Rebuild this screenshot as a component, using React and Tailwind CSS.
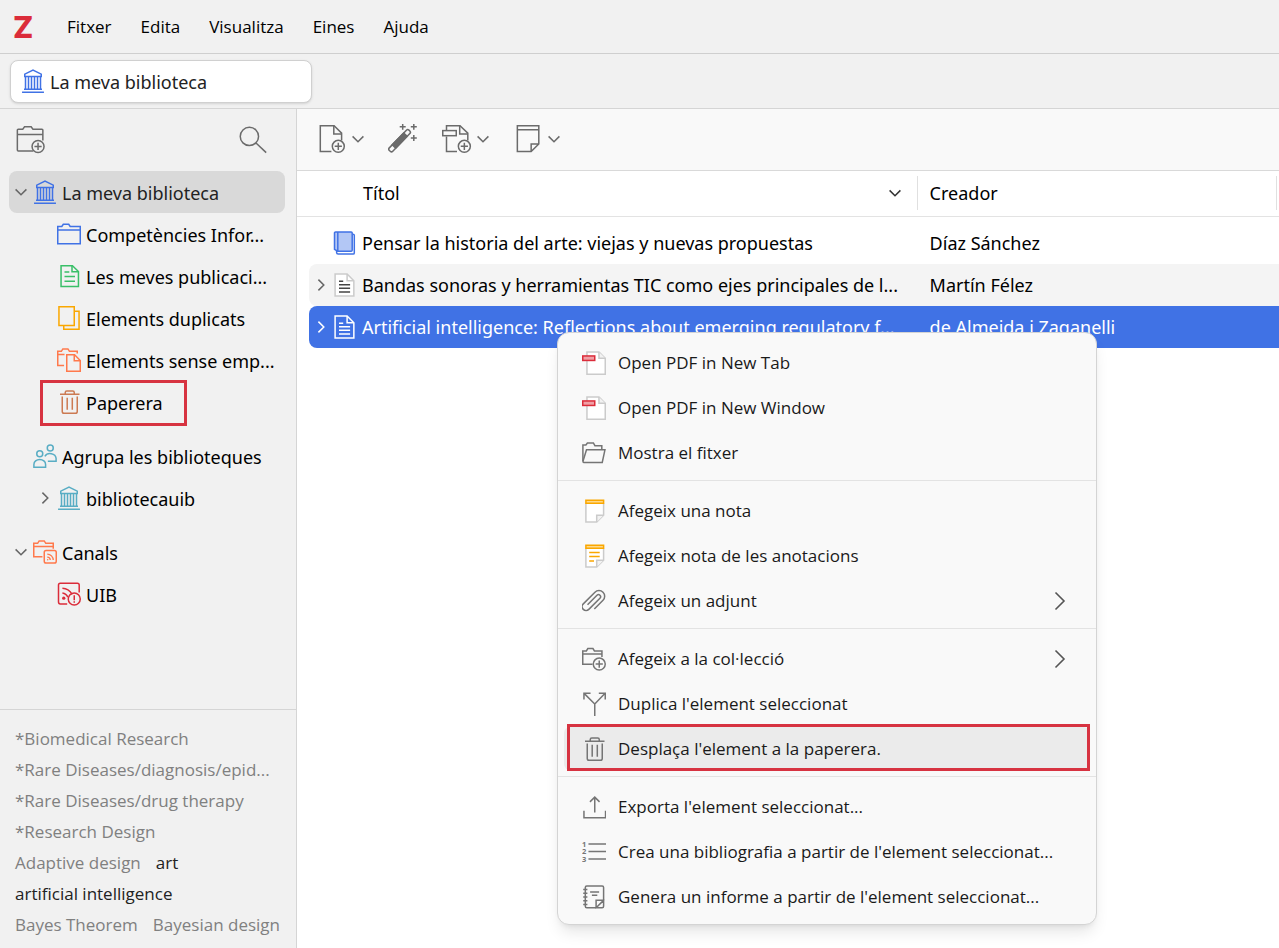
import React, { useState } from 'react';
import clsx from 'clsx';

const Icon = ({ size = 'size-6', box = 16, className, children }) => (
  <svg
    viewBox={`0 0 ${box} ${box}`}
    className={clsx(size, 'shrink-0', className)}
    fill="none"
    stroke="currentColor"
    strokeWidth="1"
    aria-hidden="true"
  >
    {children}
  </svg>
);

const ChevronDown = ({ className }) => (
  <svg viewBox="0 0 12 12" className={clsx('size-3 shrink-0', className)} fill="none" stroke="currentColor" strokeWidth="1.5" aria-hidden="true">
    <path d="M.6 3.4 6 8.8l5.4-5.4" />
  </svg>
);

const ChevronRight = ({ className }) => (
  <svg viewBox="0 0 12 12" className={clsx('size-3 shrink-0', className)} fill="none" stroke="currentColor" strokeWidth="1.5" aria-hidden="true">
    <path d="M3.4.6 8.8 6l-5.4 5.4" />
  </svg>
);

const LibraryIcon = ({ className }) => (
  <Icon className={className}>
    <path d="M2.5 5V3.4L8 .7l5.5 2.7V5z" />
    <path d="M3 5v8.5M5 5v8.5M7 5v8.5M9 5v8.5M11 5v8.5M13 5v8.5M2 13.5h12M.7 15.5h14.6" />
  </Icon>
);

const FolderIcon = ({ className }) => (
  <Icon className={className}>
    <path d="M.5 14.5V3h2.7l1-1.5h3.6l1 1.5h6.7v11.5zM.5 5.3h15" />
  </Icon>
);

const PublicationsIcon = ({ className }) => (
  <Icon className={className}>
    <path d="M2.7 1.2h7.6L14.3 5v10H2.7z" />
    <path d="M10 1.2v4h4.3M5 5.4h3.2M5 8.4h7M5 11.5h7" />
  </Icon>
);

const DuplicatesIcon = ({ className }) => (
  <Icon className={className}>
    <path d="M1.3.5h10.2v12.5H1.3z" />
    <path d="M11.5 3.5h3.2v12H4.5V13" />
  </Icon>
);

const UnfiledIcon = ({ className }) => (
  <Icon className={className}>
    <path d="M4.7 11.7H.5V2.2h2.4l1-1.6h3.4l1 1.6h5.2v1.5M.5 4.4H5" />
    <path d="M6.5 4.5h5.2l3.8 3.8v7.2h-9z" />
    <path d="M11.5 4.5v4h4" />
  </Icon>
);

const TrashIcon = ({ className }) => (
  <Icon className={className}>
    <path d="M2 2.8h13M5.5 2.8V1.6q0-1 1-1h4q1 0 1 1v1.2" />
    <path d="M3.5 4.3v10q0 1.2 1.2 1.2h7.6q1.2 0 1.2-1.2v-10M6.8 5.2v8M10.2 5.2v8" />
  </Icon>
);

const GroupsIcon = ({ className }) => (
  <Icon className={className}>
    <circle cx="11.5" cy="2.6" r="2" />
    <circle cx="4.5" cy="6.5" r="2" />
    <path d="M.6 15.5v-1.9a3.9 3.3 0 0 1 7.8 0v1.9z" />
    <path d="M7.9 8.2a4 3.5 0 0 1 7.5 1.4v1.9h-5.5" />
  </Icon>
);

const FeedsIcon = ({ className }) => (
  <Icon className={className}>
    <path d="M6.3 11.2H.5V2.2h2.6l1-1.6h3.4l1 1.6h5v3.6M.5 4.4h13" />
    <rect x="7.5" y="7" width="8" height="8.4" rx="1.2" />
    <path d="M9.5 9.4a4 4 0 0 1 4 4M9.5 11.4a2 2 0 0 1 2 2" strokeWidth=".9" />
    <circle cx="9.8" cy="13.2" r=".5" fill="currentColor" stroke="none" />
  </Icon>
);

const FeedErrorIcon = ({ className }) => (
  <Icon className={className}>
    <path d="M6.8 14.6H2.2q-1.2 0-1.2-1.2V2q0-1.2 1.2-1.2h11.4q1.2 0 1.2 1.2v5" />
    <path d="M3.6 4.2q4.2.2 6.5 4M3.6 7.4q2.6.3 3.6 2.8" />
    <circle cx="4.5" cy="10.8" r="1.1" fill="currentColor" stroke="none" />
    <circle cx="11.5" cy="11.3" r="4" />
    <path d="M11.5 8.9v3.2M11.5 12.8v1.1" />
  </Icon>
);

const CollectionAddIcon = ({ className }) => (
  <Icon className={className}>
    <path d="M7 11.5H.5V2.6h2.4l1-1.6h3.4l1 1.6h5v4M.5 4.6h13" />
    <circle cx="11.5" cy="11.4" r="4" />
    <path d="M11.5 9v4.8M9.1 11.4h4.8" />
  </Icon>
);

const PdfIcon = () => (
  <Icon>
    <path d="M3.3.6h8l4.2 4.2v10.7H3.3z" fill="#fff" stroke="#cbcbcb" />
    <path d="M11.3.6v4.2h4.2" fill="#f2f2f2" stroke="#cbcbcb" />
    <rect x=".5" y="3.3" width="8" height="3" fill="#f0a0a6" stroke="#db2c3a" />
  </Icon>
);

const FileFolderIcon = () => (
  <Icon className="text-[#757575]">
    <path d="M.6 13.5V2.7h2l1-1.4h4l1 1.8h4.6v2.8" />
    <path d="M3 5.9h12.3l-1.8 8.4H1.2q-.6 0-.5-1z" />
  </Icon>
);

const NoteIcon = ({ lines }) => (
  <Icon>
    <path d="M2.6 3v12.4h7.2l4.6-4.6V3" fill="#fff" stroke="#cbcbcb" />
    <path d="M9.8 15.4v-4.6h4.6" fill="#f2f2f2" stroke="#cbcbcb" />
    <path d="M2.6.8h11.8v2.1H2.6z" fill="#ffd98a" stroke="#faa700" />
    {lines && <path d="M4.8 5.6h7M4.8 8.4h7M4.8 11.4h3.2" stroke="#faa700" />}
  </Icon>
);

const AttachmentIcon = () => (
  <Icon className="text-[#757575]">
    <g transform="rotate(-45 8 8)">
      <path d="M3.2 6.7h8.9a1.4 1.4 0 0 1 0 2.8H1.6a2.6 2.6 0 0 1 0-5.2h11a3.8 3.8 0 0 1 0 7.6H4.4" />
    </g>
  </Icon>
);

const DuplicateItemIcon = () => (
  <Icon className="text-[#757575]">
    <path d="M8.5 16V8L1.4.9M8.5 8 15.4.9M1.3 5V.9h4.4M11.2.9h4.3V5" />
  </Icon>
);

const ExportIcon = () => (
  <Icon className="text-[#757575]">
    <path d="M1.3 10.5v4.6h14.4v-4.6M8.5 11.6V1.4M5.3 4.6l3.2-3.2 3.2 3.2" />
  </Icon>
);

const BibliographyIcon = () => (
  <Icon className="text-[#757575]">
    <path d="M4.3 2.6H16M4.3 7.6H16M4.3 12.6H16" />
    <g fill="currentColor" stroke="none" fontFamily="Open Sans, sans-serif" fontSize="5" fontWeight="700">
      <text x="0" y="4.4">1</text>
      <text x="0" y="9.4">2</text>
      <text x="0" y="14.4">3</text>
    </g>
  </Icon>
);

const ReportIcon = () => (
  <Icon className="text-[#757575]">
    <path d="M9.4 15.2H3.2q-1 0-1-1V1.6q0-1 1-1h10.2q1 0 1 1v8.6" />
    <path d="M9.4 15.2v-5h5v4q0 1-1 1zM9.6 15l4.6-4.6" />
    <path d="M5.4 4.6h6M6.6 6.9h3.6M.8 3h2.8M.8 5.5h2.8M.8 8h2.8M.8 10.5h2.8M.8 13h2.8" />
  </Icon>
);

const BookIcon = () => (
  <Icon className="text-[#4072e5]">
    <path d="M2.4 13.2v1.2q0 1 1 1h10q.8 0 .8-.8V2.8q0-.6-.9-.6" fill="#fff" />
    <path d="M1.7.6h10.4q.7 0 .7.7v11.5q0 .7-.7.7H3.1L1 12.2V1.3q0-.7.7-.7z" fill="#b3c7f5" />
    <path d="M3.2.6v12.8" />
  </Icon>
);

const ArticleIcon = ({ selected }) => (
  <Icon className={selected ? 'text-white' : 'text-[#444]'}>
    <path d="M1.4.6h8l4.5 4.6v10.2H1.4z" fill={selected ? 'none' : '#fff'} stroke={selected ? '#fff' : '#cbcbcb'} />
    <path d="M9.4.6v4.6h4.5" stroke={selected ? '#fff' : '#cbcbcb'} />
    <path d="M4 5.5h2.8M4 7.8h7.4M4 10.2h7.4M4 12.6h7.4" />
  </Icon>
);

const NewCollectionIcon = () => (
  <Icon size="size-[30px]" box={20}>
    <path d="M11.5 17.3H1.5q-.6 0-.6-.6V3.4q0-.6.6-.6h3l1.2-1.6h4.4l1.2 1.6h6q.6 0 .6.6v7M.9 6.3h17" />
    <circle cx="14.7" cy="14.3" r="4" />
    <path d="M14.7 11.9v4.8M12.3 14.3h4.8" />
  </Icon>
);

const SearchIcon = () => (
  <Icon size="size-[30px]" box={20}>
    <circle cx="7.6" cy="7.6" r="6.1" />
    <path d="m12 12 6.8 6.4" />
  </Icon>
);

const NewItemIcon = () => (
  <Icon size="size-[30px]" box={20}>
    <path d="M9.6 18.4H2.2V1.1h9.2l5 5V11" />
    <path d="M11.2 1.1v5.6h5.2" />
    <circle cx="14.2" cy="14.9" r="4" />
    <path d="M14.2 12.5v4.8M11.8 14.9h4.8" />
  </Icon>
);

const WandIcon = () => (
  <Icon size="size-[30px]" box={20}>
    <g transform="rotate(-46 7.8 11.2)">
      <rect x="-1.6" y="9.5" width="18.8" height="3.2" rx="1.2" />
      <rect x="2.4" y="9.5" width="11" height="3.2" fill="currentColor" />
    </g>
    <path d="M9.8-.2v4M7.8 1.8h4M17.2-.2v4M15.2 1.8h4M17.2 7.4v4M15.2 9.4h4" />
  </Icon>
);

const AddPdfIcon = () => (
  <Icon size="size-[30px]" box={20}>
    <path d="M3 4V1.1h9l5.2 5V11M3 8.4v10h7" />
    <path d="M11.8 1.1v5.6h5.4" />
    <rect x=".5" y="4.4" width="9" height="3.4" />
    <circle cx="14.9" cy="14.9" r="4" />
    <path d="M14.9 12.5v4.8M12.5 14.9h4.8" />
  </Icon>
);

const NewNoteIcon = () => (
  <Icon size="size-[30px]" box={20}>
    <path d="M2.9 1.1h14.3v12.2l-5.1 5.1H2.9zM2.9 3.9h14.3M12.1 18.4v-5.1h5.1" />
  </Icon>
);

const menus = ['Fitxer', 'Edita', 'Visualitza', 'Eines', 'Ajuda'];

const collections = [
  [
    { id: 'lib', label: 'La meva biblioteca', icon: LibraryIcon, color: 'text-[#4072e5]', open: true, selected: true },
    { id: 'comp', label: 'Competències Infor...', icon: FolderIcon, color: 'text-[#4072e5]', nested: true },
    { id: 'pub', label: 'Les meves publicaci...', icon: PublicationsIcon, color: 'text-[#39bf68]', nested: true },
    { id: 'dup', label: 'Elements duplicats', icon: DuplicatesIcon, color: 'text-[#faa700]', nested: true },
    { id: 'unf', label: 'Elements sense emp...', icon: UnfiledIcon, color: 'text-[#ff794c]', nested: true },
    { id: 'trash', label: 'Paperera', icon: TrashIcon, color: 'text-[#cc7a52]', nested: true, marked: true },
  ],
  [
    { id: 'groups', label: 'Agrupa les biblioteques', icon: GroupsIcon, color: 'text-[#59adc4]' },
    { id: 'uiblib', label: 'bibliotecauib', icon: LibraryIcon, color: 'text-[#59adc4]', nested: true, open: false },
  ],
  [
    { id: 'feeds', label: 'Canals', icon: FeedsIcon, color: 'text-[#ff794c]', open: true },
    { id: 'uib', label: 'UIB', icon: FeedErrorIcon, color: 'text-[#db2c3a]', nested: true },
  ],
];

const tags = [
  { name: '*Biomedical Research' },
  { name: '*Rare Diseases/diagnosis/epid...' },
  { name: '*Rare Diseases/drug therapy' },
  { name: '*Research Design' },
  { name: 'Adaptive design' },
  { name: 'art', active: true },
  { name: 'artificial intelligence', active: true },
  { name: 'Bayes Theorem' },
  { name: 'Bayesian design' },
];

const items = [
  { title: 'Pensar la historia del arte: viejas y nuevas propuestas', creator: 'Díaz Sánchez', icon: BookIcon },
  {
    title: 'Bandas sonoras y herramientas TIC como ejes principales de l...',
    creator: 'Martín Félez',
    icon: ArticleIcon,
    expandable: true,
  },
  {
    title: 'Artificial intelligence: Reflections about emerging regulatory f...',
    creator: 'de Almeida i Zaganelli',
    icon: ArticleIcon,
    expandable: true,
  },
];

const contextMenu = [
  [
    { label: 'Open PDF in New Tab', icon: <PdfIcon /> },
    { label: 'Open PDF in New Window', icon: <PdfIcon /> },
    { label: 'Mostra el fitxer', icon: <FileFolderIcon /> },
  ],
  [
    { label: 'Afegeix una nota', icon: <NoteIcon /> },
    { label: 'Afegeix nota de les anotacions', icon: <NoteIcon lines /> },
    { label: 'Afegeix un adjunt', icon: <AttachmentIcon />, submenu: true },
  ],
  [
    { label: 'Afegeix a la col·lecció', icon: <CollectionAddIcon className="text-[#757575]" />, submenu: true },
    { label: "Duplica l'element seleccionat", icon: <DuplicateItemIcon /> },
    { label: "Desplaça l'element a la paperera.", icon: <TrashIcon className="text-[#757575]" />, marked: true },
  ],
  [
    { label: "Exporta l'element seleccionat...", icon: <ExportIcon /> },
    { label: "Crea una bibliografia a partir de l'element seleccionat...", icon: <BibliographyIcon /> },
    { label: "Genera un informe a partir de l'element seleccionat...", icon: <ReportIcon /> },
  ],
];

const CollectionRow = ({ row, selected, onSelect }) => {
  const RowIcon = row.icon;
  return (
    <li className="relative">
      <button
        type="button"
        onClick={onSelect}
        className={clsx(
          'flex h-[42px] w-full items-center rounded-lg whitespace-nowrap',
          row.nested && 'pl-6',
          selected ? 'bg-[#d9d9d9] text-[#222]' : 'text-black'
        )}
      >
        <span className="flex w-6 shrink-0 justify-center text-[#666]">
          {row.open === true && <ChevronDown />}
          {row.open === false && <ChevronRight />}
        </span>
        <RowIcon className={row.color} />
        <span className="pt-0.5 pl-[5px]">{row.label}</span>
      </button>
      {row.marked && (
        <span className="pointer-events-none absolute -top-px left-[31px] h-[46px] w-[147px] border-3 border-[#d73341]" />
      )}
    </li>
  );
};

const Sidebar = () => {
  const [selected, setSelected] = useState('lib');

  return (
    <aside className="flex w-[297px] shrink-0 flex-col border-r border-[#d5d5d5] bg-[#f1f1f1]">
      <div className="flex h-[62px] items-center justify-between pr-7 pl-4 text-[#6b6b6b]">
        <button type="button" aria-label="Nova col·lecció">
          <NewCollectionIcon />
        </button>
        <button type="button" aria-label="Cerca">
          <SearchIcon />
        </button>
      </div>

      <nav className="flex flex-1 flex-col gap-3 pr-[11px] pl-[9px] font-['Noto_Sans',sans-serif] text-[18px]">
        {collections.map((group) => (
          <ul key={group[0].id}>
            {group.map((row) => (
              <CollectionRow
                key={row.id}
                row={row}
                selected={selected === row.id}
                onSelect={() => setSelected(row.id)}
              />
            ))}
          </ul>
        ))}
      </nav>

      <div className="flex flex-wrap gap-x-[15px] border-t border-[#d5d5d5] px-[15px] pt-[13px] pb-2 text-[17px] leading-[31px]">
        {tags.map((tag) => (
          <button
            key={tag.name}
            type="button"
            className={clsx('whitespace-nowrap', tag.active ? 'text-[#222]' : 'text-[#808080]')}
          >
            {tag.name}
          </button>
        ))}
      </div>
    </aside>
  );
};

const Toolbar = () => (
  <div className="flex h-[62px] items-center gap-6 border-b border-[#d9d9d9] bg-[#f9f9f9] pb-0.5 pl-5 text-[#6b6b6b]">
    <button type="button" aria-label="Element nou" className="flex items-center gap-[5px]">
      <NewItemIcon />
      <ChevronDown />
    </button>
    <button type="button" aria-label="Afegeix per identificador">
      <WandIcon />
    </button>
    <button type="button" aria-label="Afegeix un adjunt" className="flex items-center gap-[5px]">
      <AddPdfIcon />
      <ChevronDown />
    </button>
    <button type="button" aria-label="Nota nova" className="flex items-center gap-[5px]">
      <NewNoteIcon />
      <ChevronDown />
    </button>
  </div>
);

const ItemsTable = () => {
  const [selected, setSelected] = useState(2);

  const rowColor = (i) => {
    if (i === selected) return 'bg-[#4072e5] text-white';
    return i % 2 ? 'bg-[#f4f4f4] text-black' : 'bg-white text-black';
  };

  return (
    <table className="w-full table-fixed border-collapse font-['Noto_Sans',sans-serif] text-[18px]">
      <colgroup>
        <col className="w-[63.2%]" />
        <col />
      </colgroup>
      <thead>
        <tr className="h-[45px] border-b border-[#e3e3e3] text-left">
          <th className="p-0 font-normal">
            <div className="flex h-[34px] items-center justify-between border-r border-[#e0e0e0] pr-4 pl-[66px]">
              Títol
              <ChevronDown className="text-[#333]" />
            </div>
          </th>
          <th className="p-0 pr-0.5 font-normal">
            <div className="flex h-[34px] items-center border-r border-[#e0e0e0] pl-3">Creador</div>
          </th>
        </tr>
      </thead>
      <tbody>
        {items.map((item, i) => {
          const ItemIcon = item.icon;
          return (
            <tr key={item.title} className="group" onClick={() => setSelected(i)}>
              <td className="p-0 pl-3">
                <div
                  className={clsx(
                    'flex h-[42px] items-center rounded-l-lg whitespace-nowrap group-first:mt-[5px]',
                    rowColor(i)
                  )}
                >
                  <span className="flex w-6 shrink-0 justify-center">
                    {item.expandable && <ChevronRight className={i === selected ? 'text-white' : 'text-[#666]'} />}
                  </span>
                  <ItemIcon selected={i === selected} />
                  <span className="pt-0.5 pl-[5px]">{item.title}</span>
                </div>
              </td>
              <td className="p-0">
                <div
                  className={clsx(
                    'flex h-[42px] items-center pt-0.5 pl-3 whitespace-nowrap group-first:mt-[5px]',
                    rowColor(i)
                  )}
                >
                  {item.creator}
                </div>
              </td>
            </tr>
          );
        })}
      </tbody>
    </table>
  );
};

const ContextMenu = () => (
  <div
    role="menu"
    className="absolute top-[332px] left-[557px] w-[540px] rounded-xl border border-[#d4d4d4] bg-[#f9f9f9] pt-[7px] pb-[5px] text-[17px] text-[#1a1a1a] shadow-lg"
  >
    {contextMenu.map((group, i) => (
      <div key={i} className={clsx('px-1.5', i > 0 && 'mt-[5px] border-t border-[#e3e3e3] pt-[7px]')}>
        {group.map((item) => (
          <button
            key={item.label}
            type="button"
            role="menuitem"
            className="relative flex h-[45px] w-full items-center gap-3 pr-6 pl-[18px] text-left whitespace-nowrap"
          >
            {item.marked && <span className="absolute inset-x-0 inset-y-px rounded-md bg-[#ebebeb]" />}
            {item.marked && (
              <span className="pointer-events-none absolute -top-0.5 right-0 left-[3px] h-[47px] border-3 border-[#d73341]" />
            )}
            <span className="relative">{item.icon}</span>
            <span className="relative flex-1">{item.label}</span>
            {item.submenu && (
              <svg viewBox="0 0 12 20" className="h-5 w-3" fill="none" stroke="#555" strokeWidth="1.6" aria-hidden="true">
                <path d="m1.5 1.5 8.5 8.5-8.5 8.5" />
              </svg>
            )}
          </button>
        ))}
      </div>
    ))}
  </div>
);

const App = () => {
  return (
    <div className="relative flex min-h-screen flex-col overflow-hidden bg-white font-['Open_Sans','Noto_Sans',sans-serif] text-black">
      <header className="flex h-[54px] items-center border-b border-[#cfcfcf] bg-[#f1f1f1] pl-[13px] text-[17px]">
        <span className="w-[54px] font-['Inter',sans-serif] text-[30px] leading-none font-extrabold text-[#db2c3a]">Z</span>
        <nav className="flex gap-[29px]">
          {menus.map((label) => (
            <button key={label} type="button">
              {label}
            </button>
          ))}
        </nav>
      </header>

      <div className="flex h-[55px] items-center border-b border-[#d5d5d5] bg-[#f1f1f1] pl-2.5">
        <button
          type="button"
          className="flex h-[43px] w-[302px] items-center rounded-lg border border-[#d0d0d0] bg-white pl-2.5 font-['Noto_Sans',sans-serif] text-[18px] text-[#222] shadow-sm"
        >
          <LibraryIcon className="text-[#4072e5]" />
          <span className="pt-0.5 pl-[5px]">La meva biblioteca</span>
        </button>
      </div>

      <div className="flex flex-1">
        <Sidebar />
        <main className="min-w-0 flex-1 bg-white">
          <Toolbar />
          <ItemsTable />
        </main>
      </div>

      <ContextMenu />
    </div>
  );
};

export default App;
